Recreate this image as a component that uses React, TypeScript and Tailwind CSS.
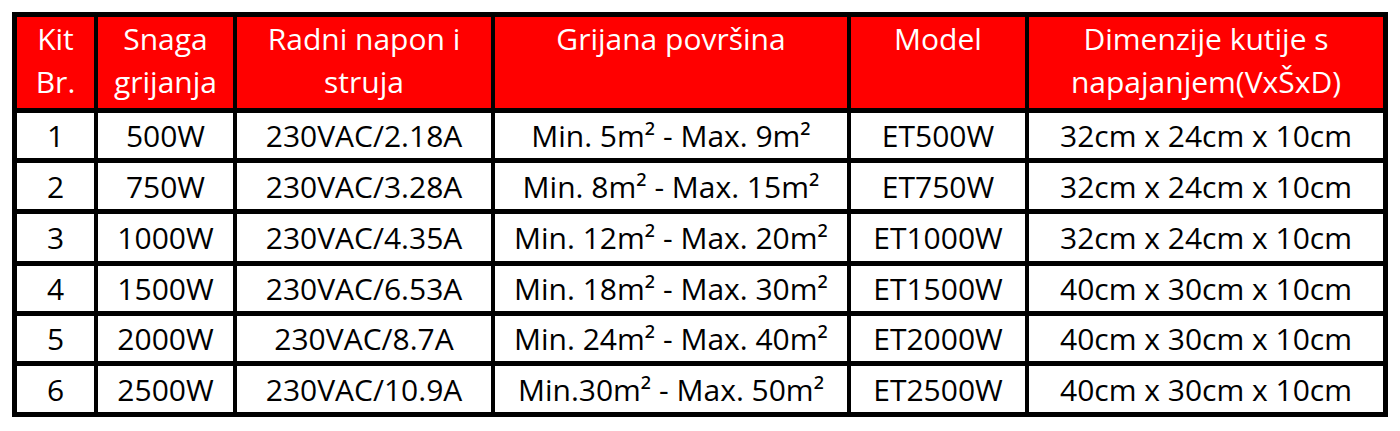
const headers = [
  ['Kit', 'Br.'],
  ['Snaga', 'grijanja'],
  ['Radni napon i', 'struja'],
  ['Grijana površina'],
  ['Model'],
  ['Dimenzije kutije s', 'napajanjem(VxŠxD)'],
];

const rows = [
  ['1', '500W', '230VAC/2.18A', 'Min. 5m² - Max. 9m²', 'ET500W', '32cm x 24cm x 10cm'],
  ['2', '750W', '230VAC/3.28A', 'Min. 8m² - Max. 15m²', 'ET750W', '32cm x 24cm x 10cm'],
  ['3', '1000W', '230VAC/4.35A', 'Min. 12m² - Max. 20m²', 'ET1000W', '32cm x 24cm x 10cm'],
  ['4', '1500W', '230VAC/6.53A', 'Min. 18m² - Max. 30m²', 'ET1500W', '40cm x 30cm x 10cm'],
  ['5', '2000W', '230VAC/8.7A', 'Min. 24m² - Max. 40m²', 'ET2000W', '40cm x 30cm x 10cm'],
  ['6', '2500W', '230VAC/10.9A', 'Min.30m² - Max. 50m²', 'ET2500W', '40cm x 30cm x 10cm'],
];

export default function App() {
  return (
    <div className="min-h-screen bg-white pl-[12px] pt-[12px] font-['Open_Sans',sans-serif]">
      <div className="grid w-max grid-cols-[77px_135px_254px_352px_174px_354px] grid-rows-[91px_45px_46px_47px_45px_45px_46px] gap-x-[4px] gap-y-[5px] bg-black p-[5px]">
        {headers.map((lines, i) => (
          <div key={i} className="flex flex-col items-center bg-[#ff0000] text-[30px] leading-[43px] text-white">
            {lines.map((l) => (
              <span key={l} className="whitespace-nowrap">{l}</span>
            ))}
          </div>
        ))}
        {rows.map((row) =>
          row.map((cell, j) => (
            <div key={row[0] + '-' + j} className="flex items-center justify-center bg-white text-[30px] text-black whitespace-nowrap">
              {cell}
            </div>
          ))
        )}
      </div>
    </div>
  );
}
